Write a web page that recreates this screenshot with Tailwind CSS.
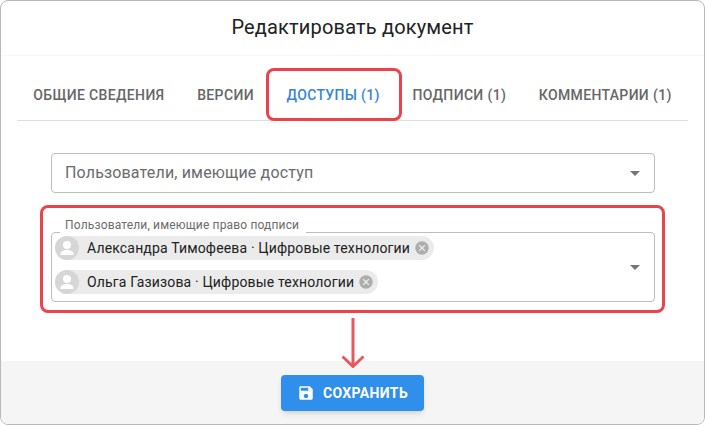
<!DOCTYPE html>
<html lang="ru">
<head>
    <meta charset="UTF-8">
    <meta name="viewport" content="width=device-width, initial-scale=1.0">
    <title>Редактировать документ</title>
    <script src="https://cdn.jsdelivr.net/npm/@tailwindcss/browser@4"></script>
</head>
<body class="bg-white font-['Roboto',sans-serif] tracking-[0.01em] text-[#212121]">
    <div class="flex min-h-screen flex-col overflow-hidden rounded-lg border border-[#b8b8b8]">
        <header class="border-b border-[#f7f7f7] pt-3 pb-3.5 text-center">
            <h1 class="text-xl leading-7">Редактировать документ</h1>
        </header>

        <main class="flex-1 px-4 pt-4">
            <!-- Вкладки -->
            <nav class="flex border-b border-[#dedede] text-sm font-medium tracking-wide text-[#666666]">
                <button type="button" class="h-12 flex-auto px-4 pb-0.5 whitespace-nowrap">ОБЩИЕ СВЕДЕНИЯ</button>
                <button type="button" class="h-12 flex-auto px-4 pb-0.5 whitespace-nowrap">ВЕРСИИ</button>
                <button type="button" class="relative h-12 flex-auto px-4 pb-0.5 whitespace-nowrap text-[#3584d8]">
                    ДОСТУПЫ (1)
                    <span class="absolute -top-1 -right-1.5 -bottom-px -left-1 rounded-lg border-3 border-[#ea434b]"></span>
                </button>
                <button type="button" class="h-12 flex-auto px-4 pb-0.5 whitespace-nowrap">ПОДПИСИ (1)</button>
                <button type="button" class="h-12 flex-auto px-4 pb-0.5 whitespace-nowrap">КОММЕНТАРИИ (1)</button>
            </nav>

            <form id="access" class="pt-8 pr-[23px] pl-[23px]">
                <!-- Доступ -->
                <div class="relative mr-2.5 ml-[11px]">
                    <select aria-label="Пользователи, имеющие доступ" class="h-10 w-full appearance-none rounded border border-[#bdbdbd] bg-white pr-10 pl-[13px] text-base text-[#6b6b6b]">
                        <option>Пользователи, имеющие доступ</option>
                    </select>
                    <svg class="pointer-events-none absolute top-2 right-2 size-6" viewBox="0 0 24 24" fill="#757575"><path d="M7 10l5 5 5-5z"/></svg>
                </div>

                <!-- Право подписи -->
                <div class="mt-3 rounded-lg border-3 border-[#ea434b] pt-6 pr-[7px] pb-2 pl-2">
                    <div class="relative flex items-center rounded border border-[#bdbdbd] p-[3px]">
                        <label for="signers" class="absolute -top-4 left-2 bg-white pr-[7px] pl-[5px] text-xs leading-4 text-[#6b6b6b]">Пользователи, имеющие право подписи</label>
                        <div class="flex flex-1 flex-wrap gap-y-2.5 pb-1">
                            <span class="flex h-6 items-center rounded-full bg-[#ebebeb] pr-1">
                                <svg class="size-6 rounded-full bg-[#d6d6d6]" viewBox="0 0 24 24" fill="#fff"><circle cx="12" cy="9" r="4"/><path d="M12 14c-3 0-6.500 1.300-6.500 3.500V19h13v-1.500C18.500 15.300 15 14 12 14z"/></svg>
                                <span class="pr-1 pl-2 text-sm">Александра Тимофеева · Цифровые технологии</span>
                                <button type="button" aria-label="Удалить">
                                    <svg class="size-4" viewBox="0 0 24 24" fill="#adadad"><path d="M12 2C6.470 2 2 6.470 2 12s4.470 10 10 10 10-4.470 10-10S17.530 2 12 2zm5 13.590L15.590 17 12 13.410 8.410 17 7 15.590 10.590 12 7 8.410 8.410 7 12 10.590 15.590 7 17 8.410 13.410 12 17 15.590z"/></svg>
                                </button>
                            </span>
                            <span class="flex h-6 items-center rounded-full bg-[#ebebeb] pr-1">
                                <svg class="size-6 rounded-full bg-[#d6d6d6]" viewBox="0 0 24 24" fill="#fff"><circle cx="12" cy="9" r="4"/><path d="M12 14c-3 0-6.500 1.300-6.500 3.500V19h13v-1.500C18.500 15.300 15 14 12 14z"/></svg>
                                <span class="pr-1 pl-2 text-sm">Ольга Газизова · Цифровые технологии</span>
                                <button type="button" aria-label="Удалить">
                                    <svg class="size-4" viewBox="0 0 24 24" fill="#adadad"><path d="M12 2C6.470 2 2 6.470 2 12s4.470 10 10 10 10-4.470 10-10S17.530 2 12 2zm5 13.590L15.590 17 12 13.410 8.410 17 7 15.590 10.590 12 7 8.410 8.410 7 12 10.590 15.590 7 17 8.410 13.410 12 17 15.590z"/></svg>
                                </button>
                            </span>
                            <input id="signers" type="text" class="h-6 w-0 min-w-8 flex-1 px-2 text-sm outline-none">
                        </div>
                        <button type="button" aria-label="Открыть список" class="mr-1">
                            <svg class="size-6" viewBox="0 0 24 24" fill="#757575"><path d="M7 10l5 5 5-5z"/></svg>
                        </button>
                    </div>
                </div>
            </form>
        </main>

        <footer class="relative flex justify-center bg-[#f5f5f5] pt-3.5 pb-[13px]">
            <!-- Стрелка к кнопке -->
            <svg class="absolute bottom-14 left-1/2 h-[50px] w-6 -translate-x-1/2" viewBox="0 0 24 50" fill="none" stroke="#e35b5e" stroke-width="3"><path d="M12 0v48M1.500 38.500L12 48.500l10.500-10"/></svg>
            <button type="submit" form="access" class="flex h-9 items-center gap-2 rounded bg-[#2f8fea] px-4 text-sm font-bold tracking-wide text-white shadow-md">
                <svg class="size-[18px]" viewBox="0 0 24 24" fill="currentColor"><path d="M17 3H5c-1.110 0-2 .9-2 2v14c0 1.100.89 2 2 2h14c1.100 0 2-.9 2-2V7l-4-4zm-5 16c-1.660 0-3-1.340-3-3s1.340-3 3-3 3 1.340 3 3-1.340 3-3 3zm3-10H5V5h10v4z"/></svg>
                СОХРАНИТЬ
            </button>
        </footer>
    </div>
</body>
</html>
